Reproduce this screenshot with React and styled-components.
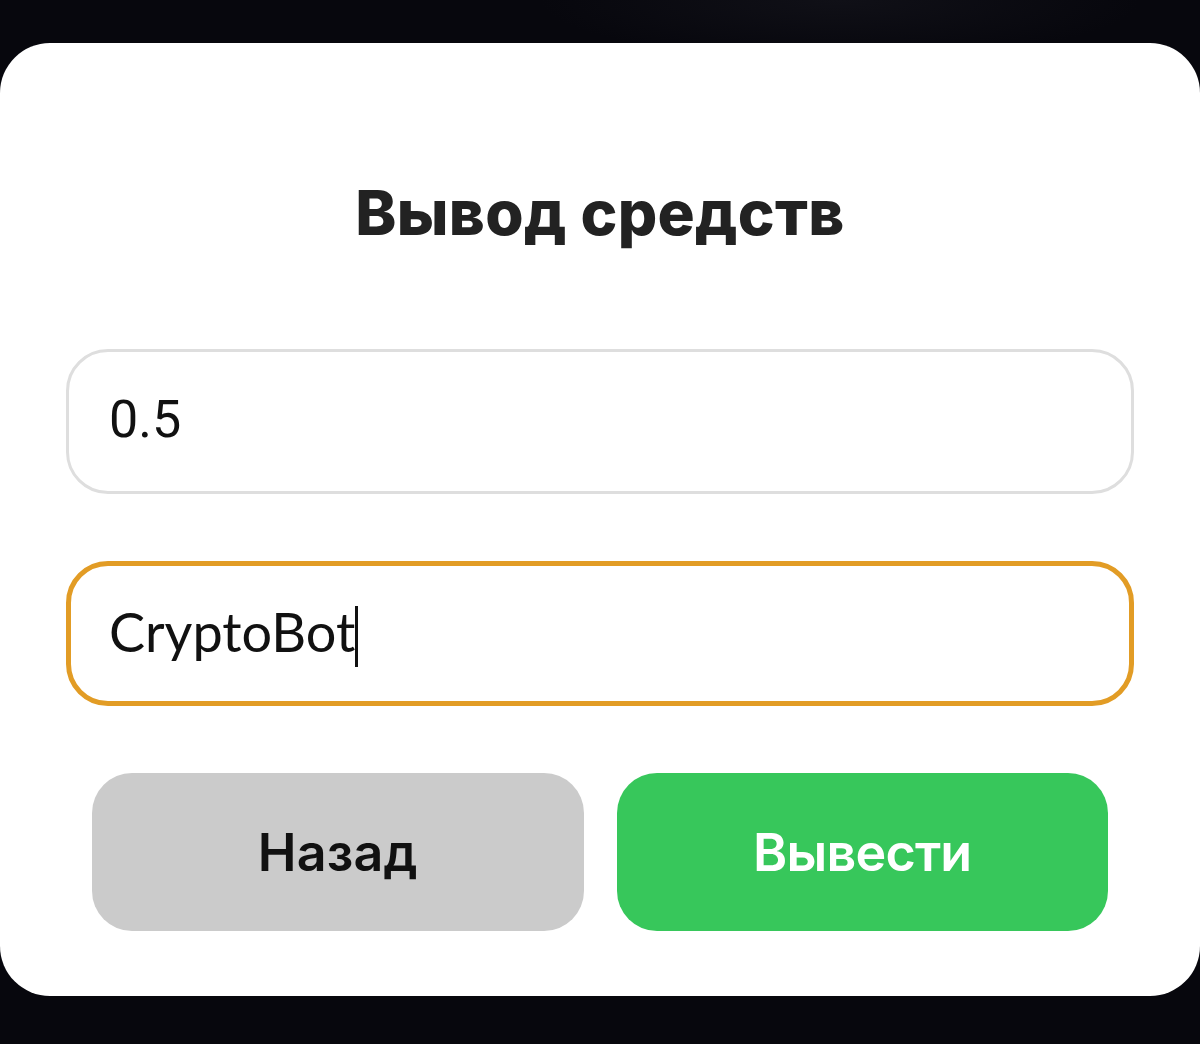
import React from 'react';
import styled, { createGlobalStyle } from 'styled-components';

const GlobalStyle = createGlobalStyle`
    html, body {
        margin: 0;
        padding: 0;
        background: #08080e;
    }
    #root {
        height: 1044px;
    }
`;

const App = () => {
    return (
        <>
            <GlobalStyle />
            <Screen>
                <Card>
                    <Title>Вывод средств</Title>
                    <Field>
                        <Value font="Roboto">0.5</Value>
                    </Field>
                    <Field focused>
                        <Value font="Lato" size={54}>
                            CryptoBot
                            <Caret />
                        </Value>
                    </Field>
                    <Buttons>
                        <Button kind="back">Назад</Button>
                        <Button kind="submit">Вывести</Button>
                    </Buttons>
                </Card>
            </Screen>
        </>
    );
};

const Screen = styled.div`
    height: 1044px;
    box-sizing: border-box;
    padding-top: 43px;
    background: radial-gradient(ellipse 300px 60px at 70% 0%, #101017 0%, #07070d 100%),
        #07070d;
`;

const Card = styled.div`
    height: 953px;
    box-sizing: border-box;
    background: #fff;
    border-radius: 50px;
    padding: 134px 66px 0;
    display: flex;
    flex-direction: column;
`;

const Title = styled.h1`
    margin: 0 0 100px;
    font-family: Inter, 'Noto Sans', sans-serif;
    font-weight: 800;
    font-size: 62px;
    line-height: 72px;
    letter-spacing: 0.3px;
    text-align: center;
    color: #222;
`;

const Field = styled.div`
    height: 145px;
    box-sizing: border-box;
    border: ${({ focused }) => (focused ? '5px solid #e29c25' : '3px solid #dedede')};
    border-radius: 42px;
    padding: 0 0 0 ${({ focused }) => (focused ? '38px' : '40px')};
    display: flex;
    align-items: center;
    margin-bottom: 67px;
    &:nth-of-type(3) {
        margin-bottom: 65px;
    }
`;

const Value = styled.div`
    display: flex;
    align-items: center;
    font-family: ${({ font }) => font}, 'Noto Sans', sans-serif;
    font-size: ${({ size }) => size || 52}px;
    color: #111;
    margin-top: -4px;
`;

const Caret = styled.span`
    display: inline-block;
    width: 3px;
    height: 61px;
    background: #111;
    margin-top: 10px;
`;

const Buttons = styled.div`
    display: grid;
    grid-template-columns: 1fr 1fr;
    gap: 33px;
    padding: 0 26px;
`;

const Button = styled.button`
    height: 158px;
    border: none;
    border-radius: 40px;
    font-family: Inter, 'Noto Sans', sans-serif;
    font-weight: 600;
    font-size: 52px;
    letter-spacing: ${({ kind }) => (kind === 'submit' ? '-0.8px' : '0.2px')};
    background: ${({ kind }) => (kind === 'submit' ? '#37c75b' : '#cbcbcb')};
    color: ${({ kind }) => (kind === 'submit' ? '#fff' : '#111')};
    cursor: pointer;
`;

export default App;
